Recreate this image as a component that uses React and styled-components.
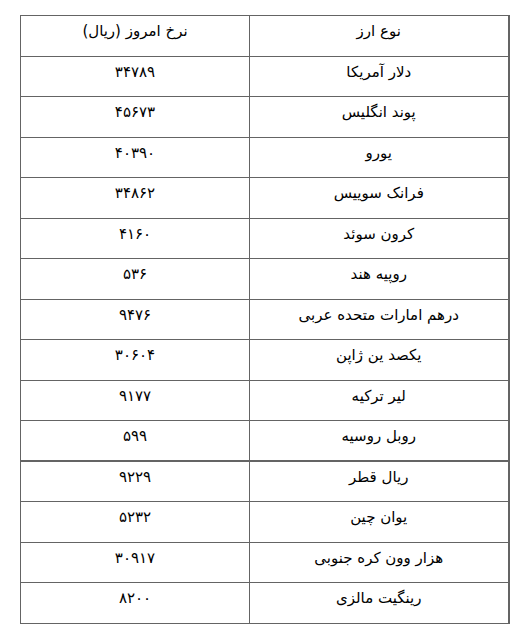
import React from 'react'
import styled, { createGlobalStyle } from 'styled-components'

const GlobalStyle = createGlobalStyle`
    html, body {
        margin: 0;
        padding: 0;
        background: #ffffff;
    }
    body {
        font-family: "DejaVu Sans", "Noto Sans", sans-serif;
        color: #000;
    }
`;

const Page = styled.div`
    padding: 15px 17px 0 20px;
`;

const Table = styled.table`
    direction: rtl;
    width: 488px;
    border-collapse: collapse;
    table-layout: fixed;
    border-right: 2px solid #646464;
`;

const Row = styled.tr`
    height: 40.5px;
    border-bottom: ${p => (p.$thick ? '2px' : '1px')} solid #646464;
`;

const Cell = styled.td`
    border: 1px solid #646464;
    border-bottom: none;
    padding: 5px 4px 0;
    vertical-align: top;
    text-align: center;
    font-size: 15px;
    line-height: 20px;
    white-space: nowrap;
`;

const rates = [
    ['دلار آمریکا', '۳۴۷۸۹'],
    ['پوند انگلیس', '۴۵۶۷۳'],
    ['یورو', '۴۰۳۹۰'],
    ['فرانک سوییس', '۳۴۸۶۲'],
    ['کرون سوئد', '۴۱۶۰'],
    ['روپیه هند', '۵۳۶'],
    ['درهم امارات متحده عربی', '۹۴۷۶'],
    ['یکصد ین ژاپن', '۳۰۶۰۴'],
    ['لیر ترکیه', '۹۱۷۷'],
    ['روبل روسیه', '۵۹۹'],
    ['ریال قطر', '۹۲۲۹'],
    ['یوان چین', '۵۲۳۲'],
    ['هزار وون کره جنوبی', '۳۰۹۱۷'],
    ['رینگیت مالزی', '۸۲۰۰'],
];

export default function App() {
    return (
        <Page>
            <GlobalStyle />
            <Table>
                <colgroup>
                    <col style={{ width: 259 }} />
                    <col style={{ width: 229 }} />
                </colgroup>
                <tbody>
                    <Row>
                        <Cell>نوع ارز</Cell>
                        <Cell>نرخ امروز (ریال)</Cell>
                    </Row>
                    {rates.map(([name, rate], i) => (
                        <Row key={name} $thick={i === 9}>
                            <Cell>{name}</Cell>
                            <Cell>{rate}</Cell>
                        </Row>
                    ))}
                </tbody>
            </Table>
        </Page>
    );
}
